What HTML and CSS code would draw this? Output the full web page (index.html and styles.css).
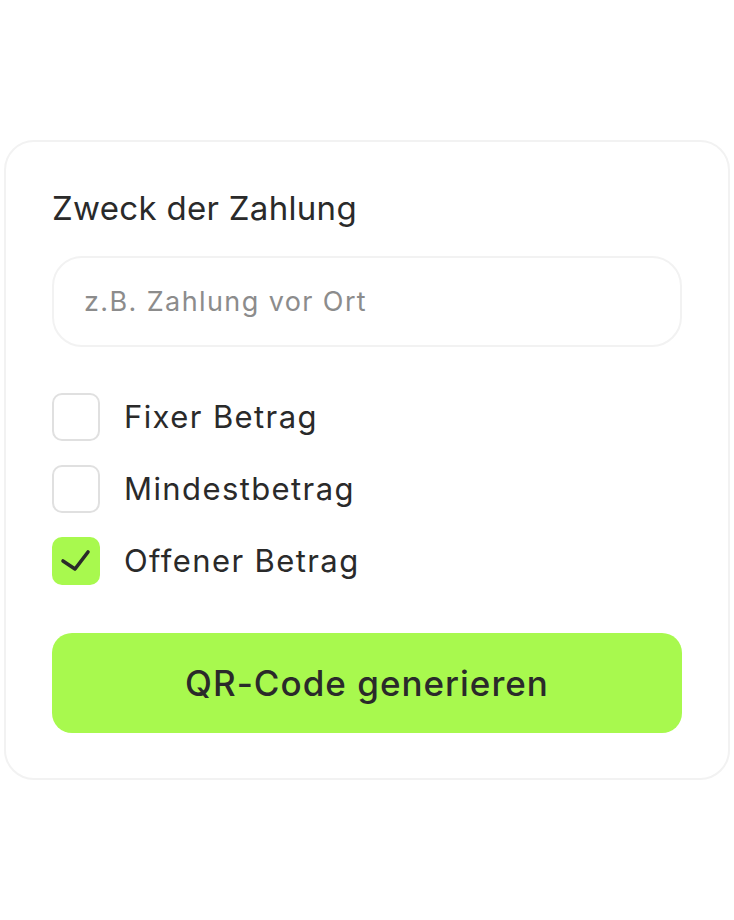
FILE: index.html
```html
<!DOCTYPE html>
<html lang="de">
<head>
    <meta charset="UTF-8">
    <meta name="viewport" content="width=device-width, initial-scale=1.0">
    <title>QR-Code Zahlung</title>
    <link rel="stylesheet" href="styles.css">
</head>
<body>
    <main class="card">
        <label class="field-label" for="purpose">Zweck der Zahlung</label>
        <input class="field-input" id="purpose" type="text" placeholder="z.B. Zahlung vor Ort">

        <ul class="options">
            <li class="option">
                <span class="box"></span>
                <span class="option-text">Fixer Betrag</span>
            </li>
            <li class="option">
                <span class="box"></span>
                <span class="option-text">Mindestbetrag</span>
            </li>
            <li class="option">
                <span class="box checked">
                    <svg width="48" height="48" viewBox="0 0 48 48">
                        <path d="M11 24 L23 32 L36 15" fill="none" stroke="#2a2a2a" stroke-width="3.6" stroke-linecap="round" stroke-linejoin="round"/>
                    </svg>
                </span>
                <span class="option-text">Offener Betrag</span>
            </li>
        </ul>

        <button class="submit" type="button">QR-Code generieren</button>
    </main>
</body>
</html>
```

FILE: styles.css
```css
body {
    margin: 0;
    padding: 140px 0 0 4px;
    background-color: #fff;
    font-family: Inter, "Open Sans", sans-serif;
    color: #2a2a2a;
}
.card {
    box-sizing: border-box;
    width: 726px;
    height: 640px;
    padding: 46px 46px 0 46px;
    border: 2px solid #f2f2f2;
    border-radius: 30px;
    display: flex;
    flex-direction: column;
}
.field-label {
    font-size: 33px;
    font-weight: 400;
    letter-spacing: 0.3px;
    line-height: 40px;
}
.field-input {
    box-sizing: border-box;
    margin-top: 28px;
    width: 630px;
    height: 91px;
    padding: 0 30px;
    border: 2px solid #f2f2f2;
    border-radius: 30px;
    font-family: inherit;
    font-size: 27px;
    letter-spacing: 1.4px;
    color: #2a2a2a;
    outline: none;
}
.field-input::placeholder {
    color: #8c8c8c;
}
ul.options {
    list-style-type: none;
    margin: 46px 0 0 0;
    padding: 0;
    display: flex;
    flex-direction: column;
    gap: 24px;
}
.option {
    display: flex;
    align-items: center;
    gap: 24px;
    height: 48px;
}
.box {
    box-sizing: border-box;
    width: 48px;
    height: 48px;
    border: 2px solid #e0e0e0;
    border-radius: 10px;
    flex-shrink: 0;
}
.box.checked {
    border: none;
    background-color: #a8f94e;
}
.box svg {
    display: block;
}
.option-text {
    font-size: 31px;
    letter-spacing: 1.4px;
    line-height: 48px;
}
.submit {
    margin-top: 48px;
    width: 630px;
    height: 100px;
    border: none;
    border-radius: 20px;
    background-color: #a8f94e;
    font-family: inherit;
    font-size: 35px;
    font-weight: 500;
    letter-spacing: 1px;
    color: #2a2a2a;
}
```
